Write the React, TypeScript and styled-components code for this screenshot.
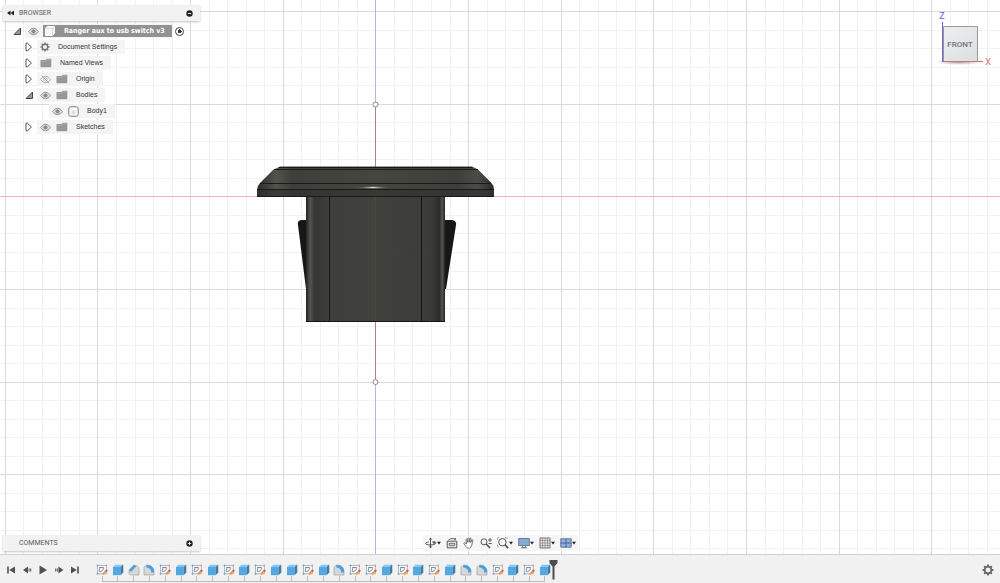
import React from "react";
import styled, { createGlobalStyle } from "styled-components";

const GlobalStyle = createGlobalStyle`
  * { box-sizing: border-box; }
  body { margin: 0; background: #fff; font-family: "Liberation Sans", Arial, sans-serif; font-size: 7px; color: #333; }
  button { border: 0; padding: 0; margin: 0; background: none; font: inherit; color: inherit; cursor: pointer; }
  ul, ol { list-style: none; margin: 0; padding: 0; }
  svg { display: block; flex: none; }
`;

const Page = styled.div`
  min-height: 100vh;
  display: flex;
  flex-direction: column;
`;

const Viewport = styled.main`
  position: relative;
  flex: 1;
  display: flex;
  flex-direction: column;
  justify-content: space-between;
  padding: 5px 0 3px 3px;
  overflow: hidden;
`;

const Canvas = styled.svg`
  position: absolute;
  inset: 0;
  width: 100%;
  height: 100%;
`;

const TopRow = styled.div`
  position: relative;
  display: flex;
  justify-content: space-between;
  align-items: flex-start;
`;

const BottomRow = styled.div`
  position: relative;
  display: grid;
  grid-template-columns: 1fr auto 1fr;
  align-items: center;
  padding-right: 3px;
`;

const BrowserPanel = styled.section`
  width: 197px;
`;

const PanelHeader = styled.header`
  display: flex;
  align-items: center;
  width: 197px;
  height: 16px;
  padding: 0 7px 0 3px;
  background: #f2f2f2;
  box-shadow: 0 1px 2px #c4c4c4;
`;

const PanelTitle = styled.h2`
  flex: 1;
  margin: 0;
  padding-left: 4px;
  font: 400 7px/16px Roboto, "Liberation Sans", sans-serif;
  color: #5c5c5c;
`;

const CollapseButton = styled.button`
  width: 9px;
  height: 12px;
  display: grid;
  place-items: center;
`;

const Tree = styled.ul`
  padding-top: 2px;
`;

const TreeRow = styled.li<{ $depth: number }>`
  display: flex;
  align-items: center;
  height: 16px;
  padding-left: ${(p) => p.$depth * 12 + 8}px;
`;

const Expander = styled.button`
  width: 12px;
  height: 16px;
  display: grid;
  place-items: center;
`;

const Spacer = styled.span`
  width: 12px;
`;

const RowBody = styled.div`
  display: flex;
  align-items: center;
  height: 14px;
  margin-left: 2px;
  padding: 0 8px 0 3px;
  gap: 5px;
  background: #f4f4f4;
`;

const RootBody = styled(RowBody)`
  gap: 4px;
  padding-right: 0;
`;

const RootLabel = styled.div`
  display: flex;
  align-items: center;
  height: 12px;
  padding: 0 7px 0 1px;
  gap: 8px;
  background: #929292;
  color: #fff;
  font-family: "DejaVu Sans Condensed", "Liberation Sans", sans-serif;
  font-weight: 700;
  white-space: nowrap;
`;

const Label = styled.span`
  padding-left: 3px;
  line-height: 14px;
  white-space: nowrap;
`;

const IconButton = styled.button`
  display: flex;
  align-items: center;
`;

const ActivateLabel = styled.label`
  display: flex;
  margin-left: 3px;
`;

const ActivateRadio = styled.input`
  appearance: none;
  width: 9px;
  height: 9px;
  margin: 0;
  border: 1px solid #444;
  border-radius: 50%;
  background: radial-gradient(circle, #333 0 2px, #fff 2px);
`;

const CubeHolder = styled.div`
  padding: 6px 4px 0 0;
`;

const NavBar = styled.nav`
  display: flex;
  align-items: center;
  gap: 5px;
  height: 16px;
  padding: 0 2px;
  background: #f6f6f6;
`;

const TimelineBar = styled.footer`
  display: flex;
  align-items: center;
  height: 29px;
  padding: 1px 6px 0 3px;
  border-top: 1px solid #cfcfcf;
  background: #f1f1f1;
`;

const Playback = styled.div`
  display: flex;
  width: 91px;
`;

const PlayButton = styled.button`
  width: 16px;
  height: 16px;
  display: grid;
  place-items: center;
`;

const Features = styled.ol`
  display: flex;
  width: 459px;
  height: 27px;
`;

const Feature = styled.li`
  flex: 1;
  display: flex;
  flex-direction: column;
  align-items: center;
  padding-top: 8px;

  &::after {
    content: "";
    width: 100%;
    height: 5px;
    border-bottom: 1px solid #bdbdbd;
    background: linear-gradient(#bbb, #bbb) 50% 0 / 1px 5px no-repeat;
  }

  &:first-child::after { width: 50%; align-self: flex-end; background-position: 0 0; }
  &:last-child::after { width: 50%; align-self: flex-start; background-position: 100% 0; }
`;

const Marker = styled.button`
  margin-left: -4px;
`;

const SettingsButton = styled.button`
  margin-left: auto;
`;

/* ---------- icons ---------- */

const Eye = ({ hidden = false }: { hidden?: boolean }) => (
  <svg width="11" height="9" viewBox="0 0 11 9" fill="none" stroke={hidden ? "#aaa" : "#949494"}>
    <path d="M.6 4.5C2 2.4 3.6 1.3 5.5 1.3S9 2.4 10.4 4.5C9 6.6 7.4 7.7 5.5 7.7S2 6.6.6 4.5Z" fill={hidden ? "#fff" : "#ddd"} />
    <circle cx="5.5" cy="4.5" r="1.7" fill={hidden ? "none" : "#888"} />
    {hidden && <path d="M2 .8 9.2 8.3" />}
  </svg>
);

const Folder = () => (
  <svg width="12" height="10" viewBox="0 0 12 10">
    <path d="M.5 2h5L6.8.8h4.5v8.4H.5Z" fill="#979797" />
    <path d="M.5 3.4h5.3L7.2 2h4" stroke="#bbb" strokeWidth=".6" fill="none" />
  </svg>
);

const Gear = ({ size = 10, color = "#777" }: { size?: number; color?: string }) => (
  <svg width={size} height={size} viewBox="0 0 12 12" fill="none" stroke={color}>
    <circle cx="6" cy="6" r="3.3" strokeWidth="1.7" />
    <path
      d="M6 .6v1.8M6 9.6v1.800M.6 6h1.800M9.600 6h1.800M2.200 2.200l1.300 1.300M8.500 8.500l1.300 1.300M9.800 2.200 8.500 3.500M3.500 8.500 2.200 9.800"
      strokeWidth="1.9"
    />
  </svg>
);

const Closed = () => (
  <svg width="8" height="10" viewBox="0 0 8 10">
    <path d="M1 1.200h1.400L6.400 5 2.400 8.800H1Z" fill="#fff" stroke="#555" />
  </svg>
);

const Opened = () => (
  <svg width="9" height="9" viewBox="0 0 9 9">
    <path d="M7.500 1v6.500H1Z" fill="#999" stroke="#444" />
  </svg>
);

const Component = () => (
  <svg width="12" height="12" viewBox="0 0 12 12">
    <path d="M1.500 3.200 3.400 1.500h7v7l-1.900 2h-7Z" fill="#f8f8f8" stroke="#fff" />
    <path d="M1.500 3.500h7v7M8.500 3.500l1.900-2" fill="none" stroke="#ccc" strokeWidth=".7" />
  </svg>
);

const Body = () => (
  <svg width="11" height="11" viewBox="0 0 11 11">
    <rect x=".8" y=".8" width="9.4" height="9.4" rx="2" fill="#fff" stroke="#777" />
    <path d="M3.500 4.300h4v4h-4Z" fill="#dedede" />
  </svg>
);

const Dot = ({ plus = false }: { plus?: boolean }) => (
  <svg width="7" height="7" viewBox="0 0 7 7">
    <circle cx="3.500" cy="3.500" r="3.200" fill="#222" />
    <path d={plus ? "M1.800 3.500h3.400M3.500 1.800v3.400" : "M1.800 3.500h3.400"} stroke="#eee" strokeWidth=".9" />
  </svg>
);

const Caret = () => (
  <svg width="4" height="12" viewBox="0 0 4 12">
    <path d="M0 4.800h4L2 7.400Z" fill="#222" />
  </svg>
);

const navItems: { name: string; menu: boolean; art: React.ReactNode }[] = [
  {
    name: "Orbit",
    menu: true,
    art: (
      <>
        <path d="M5.500 1v10M3.800 5C1.800 5.300.6 5.800.6 6.400c0 .9 2.200 1.500 4.900 1.500 2 0 3.700-.3 4.500-.8M7.200 5c1.600.1 2.600.4 3.300.8" />
        <path d="M4.300 2.600 5.500.8l1.200 1.800ZM4.300 9.400l1.200 1.800 1.200-1.800ZM8.800 3.900l2.600 2-2.900 1.200Z" fill="#555" strokeWidth=".4" />
      </>
    ),
  },
  {
    name: "Look at",
    menu: false,
    art: (
      <>
        <path d="M1.200 4.200h9.600v6.600H1.200ZM2.500 3.500C3 1.700 6 1.200 9 2M9.300 3.300V1" />
        <path d="M3.200 6.300h5.600v2.400H3.200Z" fill="#ccc" strokeWidth=".8" />
      </>
    ),
  },
  {
    name: "Pan",
    menu: false,
    art: (
      <path
        d="M3.600 6.900 3 2.700c0-.9 1-.9 1.200 0l.7 2.700L4.800 1.500c0-.9 1.100-.9 1.200 0l.4 3.700.6-3.600c.2-.8 1.200-.6 1.100.2l-.4 3.800 1.200-2.500c.4-.7 1.200-.3 1 .4L8.800 8c-.4 1.700-1.300 3.200-3 3.200-1.500 0-2.300-.8-3-1.900L.9 6.600c-.4-.8.6-1.300 1.100-.7Z"
        fill="#fff"
        strokeWidth=".8"
      />
    ),
  },
  {
    name: "Zoom",
    menu: false,
    art: (
      <>
        <circle cx="4" cy="4.800" r="3" />
        <path d="m6.200 7 3.800 4" strokeWidth="1.700" />
        <path d="M8 3h4M10 1v4M8.400 6.500h3.400" strokeWidth=".9" />
      </>
    ),
  },
  {
    name: "Fit",
    menu: true,
    art: (
      <>
        <path d="M.6 2.500V.6h2M8 .6h2v2M.6 7.800v2h2" strokeWidth=".8" strokeDasharray="1 1" />
        <circle cx="5.400" cy="5.200" r="3.700" />
        <path d="m8 7.800 3.200 3.400" strokeWidth="1.700" />
      </>
    ),
  },
  {
    name: "Display settings",
    menu: true,
    art: (
      <>
        <path d="M.7 1.500h10.600v7H.7Z" fill="#86acd4" stroke="#687c94" />
        <path d="M4.500 9v1.500h3V9M3 10.800h6" stroke="#777" />
      </>
    ),
  },
  {
    name: "Grid and snaps",
    menu: true,
    art: (
      <>
        <path d="M1 1h10v10H1Z" fill="#e4e4e4" stroke="#777" />
        <path d="M3.500 1v10M6 1v10M8.500 1v10M1 3.500h10M1 6h10M1 8.500h10" stroke="#888" strokeWidth=".7" />
      </>
    ),
  },
  {
    name: "Viewports",
    menu: true,
    art: (
      <>
        <path d="M.8 1.800h10.400v8.400H.8Z" fill="#8fb2df" stroke="#62779b" />
        <path d="M6 1.800v8.400M.8 6h10.400" stroke="#4d628a" />
      </>
    ),
  },
];

const playback: [string, string][] = [
  ["Go to start", "M1.200 1.500h1.600v7H1.200ZM9 1.500v7L3.200 5Z"],
  ["Step back", "M1 5l5-3.500v7ZM6.600 3.400h1v3.200h-1ZM8.200 3.400h1v3.200h-1Z"],
  ["Play", "M1.500.5 9 5 1.500 9.500Z"],
  ["Step forward", "M9.400 5l-5-3.500v7ZM2.800 3.400h1v3.200h-1ZM1.200 3.400h1v3.200h-1Z"],
  ["Go to end", "M8.800 1.500H7.200v7h1.600ZM1 1.500v7L6.800 5Z"],
];

type Kind = "S" | "E" | "C" | "F";
const kindNames: Record<Kind, string> = { S: "Sketch", E: "Extrude", C: "Chamfer", F: "Fillet" };
const features = "SECFSESESESEESEFSSESESEFFSESE".split("") as Kind[];

const FeatureIcon = ({ kind }: { kind: Kind }) => (
  <svg width="12" height="12" viewBox="0 0 12 12" fill="none">
    {kind === "S" && (
      <>
        <path d="M1.500 1.500h8.800v8.300H1.500Z" fill="#fafafa" stroke="#a4a9b0" strokeWidth=".8" />
        <path d="M.5 1.500h2M1.500.5v2M10.300.5v2M.5 9.800h2M1.500 8.800v2" stroke="#6f9cc7" strokeWidth=".8" />
        <path d="M3.300 7.700c0-2 .3-4 1-4.400M3.300 3.500h4.300M3.400 7.800c2 0 3.600-1 4.200-4.200" stroke="#5a7695" strokeWidth=".8" />
        <path d="m6.800 10.400 3-3" stroke="#f0953a" strokeWidth="2" />
        <path d="m9.700 7.500 1.500-1.500" stroke="#d85b43" strokeWidth="2" />
      </>
    )}
    {kind === "E" && (
      <>
        <path d="M1 3h7.600v8.200H1Z" fill="#55a7e0" />
        <path d="M1 3 3.200.8H11L8.600 3Z" fill="#85c7f2" />
        <path d="M8.600 3 11 .8v8l-2.400 2.400Z" fill="#347cb3" />
        <path d="M11 .8v8" stroke="#777" strokeWidth=".6" />
      </>
    )}
    {kind === "C" && (
      <>
        <path d="M1 6.200 5.800 1.200C9 1.200 11 3 11 5.500V11H2.200L1 9.800Z" fill="#d8d8d8" stroke="#999" strokeWidth=".6" />
        <path d="M.8 6.200 5.600 1l3 .8-5.400 6Z" fill="#4ba1df" />
      </>
    )}
    {kind === "F" && (
      <>
        <path d="M1 3.200C2.600.8 5 .6 7 1.700 9.600 3 11 5 11 8v3H1Z" fill="#d8d8d8" stroke="#999" strokeWidth=".6" />
        <path d="M3.600 1C8 .2 11.400 3.600 11.200 8L8.400 9C8.400 5.600 6.500 3.800 3 3.200Z" fill="#4ba1df" />
      </>
    )}
  </svg>
);

/* ---------- model canvas ---------- */

const ORIGIN_X = 375.9;
const ORIGIN_Y = 196.9;
const STEP = 18.53;
const snap = (v: number) => Math.floor(v) + 0.5;

const Grid = () => {
  const lines: React.ReactNode[] = [];
  for (const major of [false, true]) {
    for (let i = -20; i < 130; i++) {
      if ((i % 5 === 0) !== major) continue;
      const x = snap(ORIGIN_X + i * STEP);
      const y = snap(ORIGIN_Y + i * STEP);
      const stroke = major ? "#dadadc" : "#f2f2f3";
      lines.push(<line key={`v${i}`} x1={x} x2={x} y1="0" y2="100%" stroke={stroke} />);
      lines.push(<line key={`h${i}`} y1={y} y2={y} x1="0" x2="100%" stroke={stroke} />);
    }
  }
  return <g>{lines}</g>;
};

const Model = () => (
  <Canvas aria-label="Front view of the switch body">
    <defs>
      <linearGradient id="flange" x1="0" x2="1">
        <stop offset="0" stopColor="#2b2b29" />
        <stop offset=".08" stopColor="#53534e" />
        <stop offset=".15" stopColor="#3e3e3a" />
        <stop offset=".5" stopColor="#464641" />
        <stop offset=".85" stopColor="#3e3e3a" />
        <stop offset=".93" stopColor="#4b4b47" />
        <stop offset="1" stopColor="#2b2b29" />
      </linearGradient>
      <linearGradient id="stem" x1="0" x2="1">
        <stop offset="0" stopColor="#22221f" />
        <stop offset=".03" stopColor="#555552" />
        <stop offset=".06" stopColor="#353533" />
        <stop offset=".16" stopColor="#3e3e3b" />
        <stop offset=".5" stopColor="#41413e" />
        <stop offset=".9" stopColor="#3b3b38" />
        <stop offset=".96" stopColor="#2b2b29" />
        <stop offset=".98" stopColor="#555552" />
        <stop offset="1" stopColor="#222220" />
      </linearGradient>
      <radialGradient id="shine">
        <stop offset="0" stopColor="#e6e6da" />
        <stop offset="1" stopColor="#55554f" stopOpacity="0" />
      </radialGradient>
    </defs>
    <Grid />
    <line x1="0" x2="100%" y1="196.5" y2="196.5" stroke="#f0b4b4" />
    <line x1="375.5" x2="375.5" y1="0" y2="100%" stroke="#b4b4e8" />
    <path d="M375.500 104v278" stroke="#b07f8c" />
    <path d="M307 220h-6q-4 1-3 5l8 64h1ZM444 220h8q5 1 4 5l-10 64h-2Z" fill="#171716" />
    <path d="M306 196h139v126H306Z" fill="url(#stem)" />
    <path d="M329.500 197v124M421.500 197v124M306 321.500h139" stroke="#151514" fill="none" />
    <path d="M375.500 197v124" stroke="#4b4934" />
    <path d="M280 166.500h192l6 3 13 13q3 3 3 7v7.500H257V190q0-4 3-7l13-13Z" fill="url(#flange)" />
    <path d="M257 189.500h237v7.500H257Z" fill="#32322f" opacity=".7" />
    <path d="M279 167.500h193M274 169.500h204M260 183.500h231M257 189.500h237M257 196.500h237" stroke="#1a1a18" fill="none" />
    <ellipse cx="373" cy="187.500" rx="17" ry="1.600" fill="url(#shine)" />
    <g fill="#fff" stroke="#8b8490">
      <circle cx="375.500" cy="104.500" r="2.500" />
      <circle cx="375.500" cy="382" r="2.500" />
    </g>
  </Canvas>
);

const ViewCube = () => (
  <svg width="58" height="60" viewBox="0 0 58 60" role="img" aria-label="View cube, front">
    <defs>
      <linearGradient id="face" x1="0" x2="1" y1="0" y2="1">
        <stop offset="0" stopColor="#eceeef" />
        <stop offset="1" stopColor="#dcdfe1" />
      </linearGradient>
      <radialGradient id="shadow">
        <stop offset="0" stopColor="#555" stopOpacity=".6" />
        <stop offset="1" stopColor="#777" stopOpacity="0" />
      </radialGradient>
    </defs>
    <ellipse cx="21" cy="51" rx="24" ry="3" fill="url(#shadow)" />
    <path d="M5.500 15.500h34v35h-34Z" fill="url(#face)" stroke="#999" />
    <path d="M4.500 11v40" stroke="#6a66dc" />
    <path d="M5 50.500h40" stroke="#d9736f" />
    <g textAnchor="middle" fontFamily="Roboto, sans-serif">
      <text x="4" y="8" fontSize="9" fill="#6763df">Z</text>
      <text x="50" y="54" fontSize="9" fill="#e06a68">X</text>
      <text x="22" y="36" fontSize="8" fontWeight="500" fill="#707476">FRONT</text>
    </g>
  </svg>
);

interface Item {
  name: string;
  depth: number;
  expand?: "open" | "closed";
  eye?: "shown" | "hidden";
  icon: React.ReactNode;
}

const items: Item[] = [
  { name: "Document Settings", depth: 1, expand: "closed", icon: <Gear /> },
  { name: "Named Views", depth: 1, expand: "closed", icon: <Folder /> },
  { name: "Origin", depth: 1, expand: "closed", eye: "hidden", icon: <Folder /> },
  { name: "Bodies", depth: 1, expand: "open", eye: "shown", icon: <Folder /> },
  { name: "Body1", depth: 2, eye: "shown", icon: <Body /> },
  { name: "Sketches", depth: 1, expand: "closed", eye: "shown", icon: <Folder /> },
];

export default function App() {
  return (
    <Page>
      <GlobalStyle />
      <Viewport>
        <Model />
        <TopRow>
          <BrowserPanel>
            <PanelHeader>
              <CollapseButton aria-label="Collapse browser">
                <svg width="7" height="6" viewBox="0 0 7 6">
                  <path d="M3.500.5v5L0 3ZM7 .5v5L3.500 3Z" fill="#222" />
                </svg>
              </CollapseButton>
              <PanelTitle>BROWSER</PanelTitle>
              <IconButton aria-label="Hide browser"><Dot /></IconButton>
            </PanelHeader>
            <Tree>
              <TreeRow $depth={0}>
                <Expander aria-label="Collapse design"><Opened /></Expander>
                <RootBody>
                  <IconButton aria-label="Toggle design visibility"><Eye /></IconButton>
                  <RootLabel><Component />Ranger aux to usb switch v3</RootLabel>
                </RootBody>
                <ActivateLabel>
                  <ActivateRadio type="radio" name="active" defaultChecked aria-label="Activate component" />
                </ActivateLabel>
              </TreeRow>
              {items.map((item) => (
                <TreeRow key={item.name} $depth={item.depth}>
                  {item.expand ? (
                    <Expander aria-label={`Expand ${item.name}`}>
                      {item.expand === "open" ? <Opened /> : <Closed />}
                    </Expander>
                  ) : (
                    <Spacer />
                  )}
                  <RowBody>
                    {item.eye && (
                      <IconButton aria-label={`Toggle ${item.name}`}>
                        <Eye hidden={item.eye === "hidden"} />
                      </IconButton>
                    )}
                    {item.icon}
                    <Label>{item.name}</Label>
                  </RowBody>
                </TreeRow>
              ))}
            </Tree>
          </BrowserPanel>
          <CubeHolder><ViewCube /></CubeHolder>
        </TopRow>
        <BottomRow>
          <PanelHeader>
            <CollapseButton as="span" />
            <PanelTitle>COMMENTS</PanelTitle>
            <IconButton aria-label="Show comments"><Dot plus /></IconButton>
          </PanelHeader>
          <NavBar>
            {navItems.map((n) => (
              <IconButton key={n.name} aria-label={n.name}>
                <svg width="12" height="12" viewBox="0 0 12 12" fill="none" stroke="#555">{n.art}</svg>
                {n.menu && <Caret />}
              </IconButton>
            ))}
          </NavBar>
        </BottomRow>
      </Viewport>
      <TimelineBar>
        <Playback>
          {playback.map(([name, d]) => (
            <PlayButton key={name} aria-label={name}>
              <svg width="10" height="10" viewBox="0 0 10 10"><path d={d} fill="#505050" /></svg>
            </PlayButton>
          ))}
        </Playback>
        <Features>
          {features.map((kind, i) => (
            <Feature key={i}>
              <IconButton aria-label={kindNames[kind]}><FeatureIcon kind={kind} /></IconButton>
            </Feature>
          ))}
        </Features>
        <Marker aria-label="Timeline position">
          <svg width="9" height="21" viewBox="0 0 9 21">
            <path d="M.5 1h8v3L5.500 7.500v13h-2v-13L.5 4Z" fill="#4c4c4c" />
          </svg>
        </Marker>
        <SettingsButton aria-label="Timeline settings"><Gear size={12} color="#666" /></SettingsButton>
      </TimelineBar>
    </Page>
  );
}
